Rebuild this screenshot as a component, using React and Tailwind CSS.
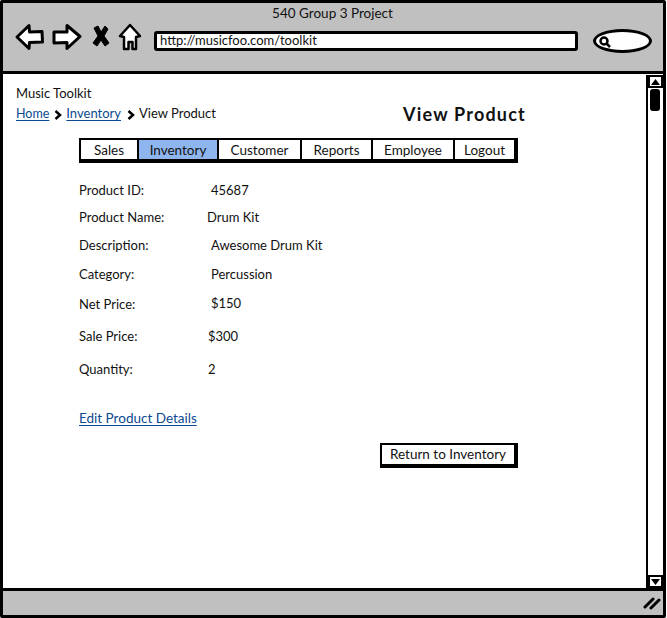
import React from 'react';

const tabs = [
  { label: 'Sales', cls: 'w-[58px]' },
  { label: 'Inventory', cls: 'w-[80px] bg-[#8fb5ee]' },
  { label: 'Customer', cls: 'w-[83px]' },
  { label: 'Reports', cls: 'w-[71px]' },
  { label: 'Employee', cls: 'w-[82px]' },
  { label: 'Logout', cls: 'w-[59px]' },
];

const rows = [
  { label: 'Product ID:', value: '45687', cls: 'h-[27px]', valueCls: 'ml-[132px]' },
  { label: 'Product Name:', value: 'Drum Kit', cls: 'h-[27px]', valueCls: 'ml-[128px]' },
  { label: 'Description:', value: 'Awesome Drum Kit', cls: 'h-[29px]', valueCls: 'ml-[132px]' },
  { label: 'Category:', value: 'Percussion', cls: 'h-[29px]', valueCls: 'ml-[132px]' },
  { label: 'Net Price:', value: '$150', cls: 'h-[31px]', valueCls: 'ml-[132px] -translate-y-[1px]' },
  { label: 'Sale Price:', value: '$300', cls: 'h-[33px]', valueCls: 'ml-[129px]' },
  { label: 'Quantity:', value: '2', cls: 'h-[33px]', valueCls: 'ml-[129px]' },
];

const NavIcons = () => (
  <svg width="128" height="30" viewBox="0 0 128 30" className="shrink-0 -translate-y-[4px]" fill="white" stroke="black" strokeWidth="3" strokeLinejoin="round">
    <path d="M3 15 L15 3.5 L15.5 10 L28 9.5 L28.5 20 L15.5 20.5 L15 26.5 Z" />
    <path d="M40 10 L53 10 L53 3.5 L66 14.5 L53 26.5 L53 20.5 L40 21 Z" />
    <path d="M80 6 L84 4 L87 10 L91 4 L94 7 L90 14 L95 21 L91 24 L87 18 L83 24 L79 21 L84 14 Z" fill="black" strokeWidth="1" />
    <path d="M106 14 L116 3 L126 14 L122 15 L122 27 L118.5 27 L118.5 20 L114.5 20 L114.5 27 L110 27 L110 15 Z" strokeWidth="2.5" />
  </svg>
);

const Search = () => (
  <div className="ml-[15px] w-[59px] h-[24px] rounded-[50%] bg-white border-[3px] border-black flex items-center pl-[2px] shrink-0">
    <svg width="13" height="13" viewBox="0 0 13 13" fill="none" stroke="black">
      <circle cx="6" cy="6" r="3.5" strokeWidth="2.5" />
      <path d="M8.5 8.5 L12 12" strokeWidth="2.5" />
    </svg>
  </div>
);

const Chevron = ({ cls }) => (
  <svg width="8" height="10" viewBox="0 0 8 10" fill="none" stroke="black" strokeWidth="2.5" className={`${cls} mt-[2px] shrink-0`}>
    <path d="M1.5 1 L6 5 L1.5 9" />
  </svg>
);

const ScrollArrow = ({ down }) => (
  <div className="h-[13px] bg-white border-2 border-black flex items-center justify-center shrink-0">
    <svg width="9" height="6" viewBox="0 0 9 6" fill="black">
      <path d={down ? 'M0 0 H9 L4.5 6 Z' : 'M0 6 H9 L4.5 0 Z'} />
    </svg>
  </div>
);

export default function App() {
  return (
    <div className="w-[667px] h-[618px] bg-white text-[13px] text-[#111] font-['Lato',sans-serif]">
      <div className="w-[666px] h-[618px] border-[3px] border-black rounded-[2px] flex flex-col overflow-hidden">
        <header className="h-[71px] bg-[#c0c0c0] border-b-[3px] border-black shrink-0 px-[11px]">
          <div className="text-center text-[13.5px] leading-[18px] pt-[1px] pr-[1px] h-[20px]">540 Group 3 Project</div>
          <div className="flex items-center mt-[3px]">
            <NavIcons />
            <div className="ml-[12px] w-[429px] h-[20px] bg-white border-[3px] border-black rounded-[3px] flex items-center pl-[3px] pb-[1px] leading-none">
              http://musicfoo.com/toolkit
            </div>
            <Search />
          </div>
        </header>

        <div className="flex-1 min-h-0 flex">
          <main className="flex-1 pl-[13px]">
            <div className="leading-[18px] mt-[10px]">Music Toolkit</div>
            <div className="flex items-center h-[24px] w-[510px]">
              <a className="text-[#0b4a8f] underline underline-offset-2 text-[12.5px]">Home</a>
              <Chevron cls="ml-[5px] mr-[4px]" />
              <a className="text-[#0b4a8f] underline underline-offset-2">Inventory</a>
              <Chevron cls="ml-[6px] mr-[4px]" />
              <span>View Product</span>
              <h1 className="ml-auto text-[18px] font-bold tracking-[1.2px] leading-none">View Product</h1>
            </div>

            <nav className="ml-[63px] mt-[12px] w-[439px] h-[25px] flex border-2 border-b-[4px] border-r-[4px] border-black bg-white text-[13.5px]">
              {tabs.map((t, i) => (
                <div key={t.label} className={`${t.cls} pt-[1px] flex items-center justify-center ${i < tabs.length - 1 ? 'border-r-2 border-black' : ''}`}>
                  {t.label}
                </div>
              ))}
            </nav>

            <section className="ml-[63px] mt-[14px]">
              {rows.map((r) => (
                <div key={r.label} className={`${r.cls} flex items-center`}>
                  <span className="w-[0px] whitespace-nowrap">{r.label}</span>
                  <span className={r.valueCls}>{r.value}</span>
                </div>
              ))}
            </section>

            <a className="block ml-[63px] mt-[23px] text-[#0b4a8f] text-[13.5px] underline underline-offset-2 leading-[18px]">Edit Product Details</a>

            <div className="ml-[364px] mt-[16px] w-[138px] h-[25px] bg-white border-2 border-b-[4px] border-r-[4px] border-black flex items-center justify-center text-[13.5px]">
              Return to Inventory
            </div>
          </main>

          <aside className="w-[17px] shrink-0 border-l-2 border-black flex flex-col mt-[1px] bg-white">
            <ScrollArrow />
            <div className="flex-1">
              <div className="w-[10px] h-[22px] ml-[2px] mt-[1px] rounded-[3px] bg-black" />
            </div>
            <ScrollArrow down />
          </aside>
        </div>

        <footer className="h-[27px] bg-[#c0c0c0] border-t-[3px] border-black shrink-0 flex items-center justify-end pr-[2px]">
          <svg width="18" height="14" viewBox="0 0 18 14" stroke="black" strokeWidth="3" strokeLinecap="round">
            <path d="M2 11 L10 3" />
            <path d="M8 12 L16 4" />
          </svg>
        </footer>
      </div>
    </div>
  );
}
